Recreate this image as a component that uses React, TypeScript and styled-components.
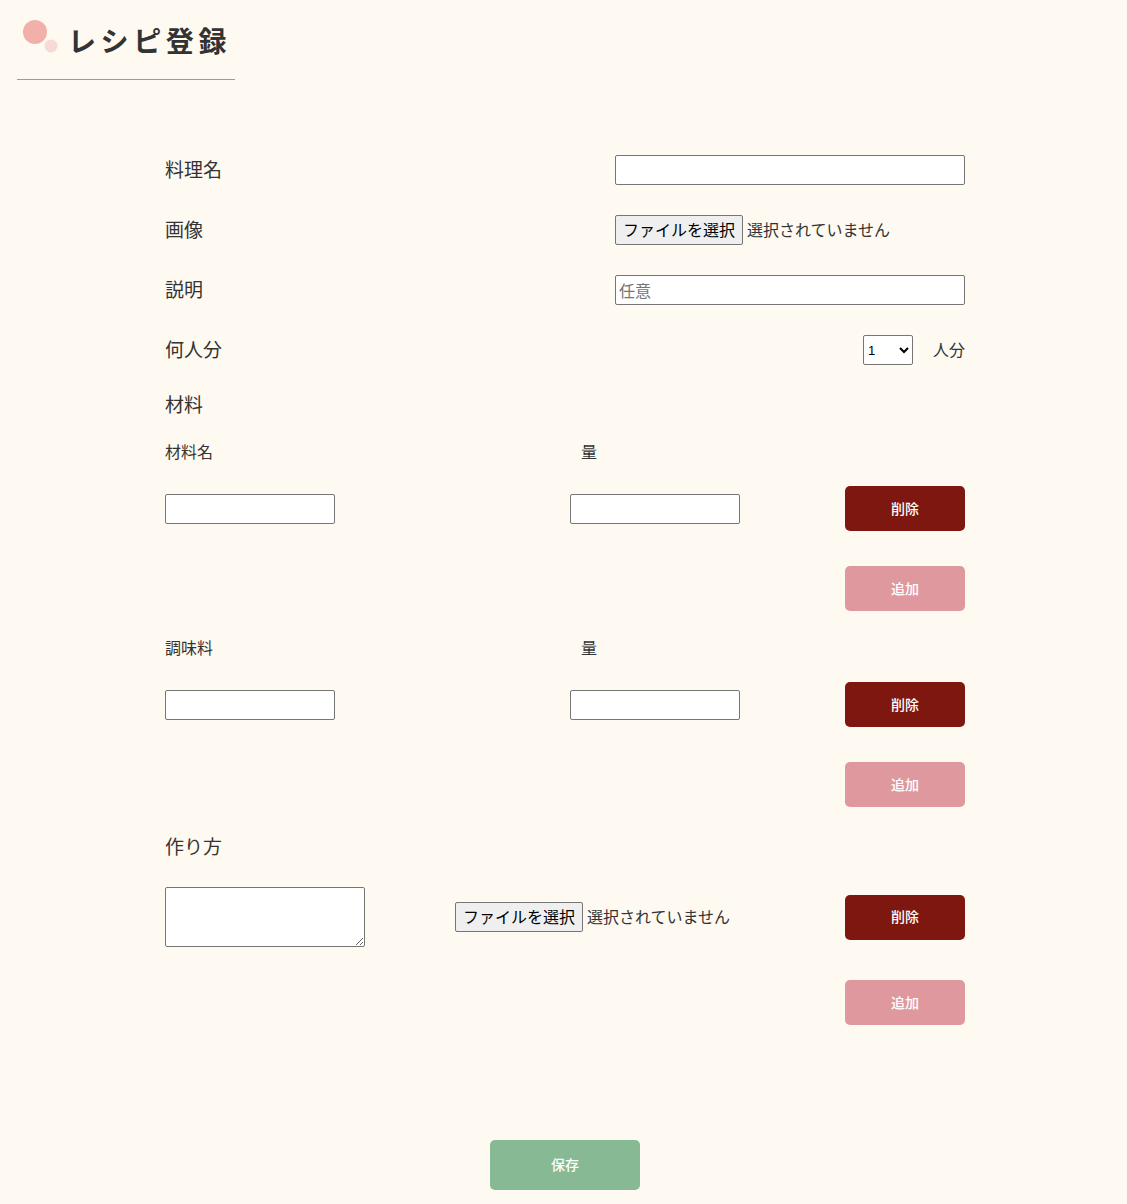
import React, { useState } from 'react';
import styled, { createGlobalStyle } from 'styled-components';

const GlobalStyle = createGlobalStyle`
  body {
    margin: 0;
    background-color: #fef9f1;
    color: #333;
    font-family: "Noto Sans CJK JP", "Noto Sans", sans-serif;
  }
`;

const Page = styled.div`
  padding-bottom: 14px;
`;

const Header = styled.header`
  display: flex;
  align-items: flex-start;
  gap: 9px;
  width: 212px;
  height: 79px;
  margin-left: 17px;
  padding-left: 6px;
  border-bottom: 1px solid #d9837b;
`;

const Dots = styled.svg`
  margin-top: 19px;
  flex-shrink: 0;
`;

const Title = styled.h1`
  margin: 20px 0 0;
  font-size: 28px;
  line-height: 40px;
  font-weight: 700;
  letter-spacing: 4.6px;
  color: #333;
  white-space: nowrap;
`;

const Form = styled.form`
  width: 800px;
  margin: 75px auto 0;
  padding-left: 3px;
  display: flex;
  flex-direction: column;
`;

const FieldRow = styled.div`
  display: flex;
  justify-content: space-between;
  align-items: center;
  height: 30px;
  margin-bottom: 30px;
`;

const Label = styled.label`
  font-size: 19px;
  line-height: 30px;
  margin-top: -3px;
`;

const SectionTitle = styled.div<{ $top: number; $bottom: number }>`
  font-size: 19px;
  line-height: 30px;
  margin-top: ${(p) => p.$top}px;
  margin-bottom: ${(p) => p.$bottom}px;
`;

const TextInput = styled.input<{ $width: number }>`
  box-sizing: border-box;
  width: ${(p) => p.$width}px;
  height: 30px;
  padding: 0 3px;
  border: 1px solid #767676;
  border-radius: 2px;
  background: #fff;
  font-family: inherit;
  font-size: 16px;
  color: #333;
  &::placeholder {
    color: #757575;
  }
`;

const FilePicker = styled.div`
  display: flex;
  align-items: center;
  gap: 4px;
  font-size: 16px;
  color: #333;
`;

const FileButton = styled.label`
  box-sizing: border-box;
  height: 30px;
  padding: 0 7px 2px;
  display: flex;
  align-items: center;
  border: 1px solid #767676;
  border-radius: 2px;
  background: #efefef;
  color: #000;
  font-size: 16px;
  cursor: pointer;
  input {
    display: none;
  }
`;

const FileStatus = styled.span`
  margin-top: -2px;
`;

const ServingsBox = styled.div`
  display: flex;
  align-items: center;
  gap: 20px;
  font-size: 16px;
  span {
    margin-top: -2px;
  }
`;

const Select = styled.select`
  width: 50px;
  height: 30px;
  border: 1px solid #767676;
  border-radius: 2px;
  background: #fff;
  font-size: 13px;
  font-family: "Liberation Sans", Arial, sans-serif;
`;

const ColumnHeads = styled.div`
  display: grid;
  grid-template-columns: 416px 1fr;
  font-size: 16px;
  line-height: 24px;
  margin-top: -1px;
  margin-bottom: 23px;
`;

const ItemRow = styled.div<{ $cols: string; $height: number }>`
  display: grid;
  grid-template-columns: ${(p) => p.$cols};
  align-items: center;
  height: ${(p) => p.$height}px;
`;

const TextArea = styled.textarea`
  box-sizing: border-box;
  width: 200px;
  height: 60px;
  border: 1px solid #767676;
  border-radius: 2px;
  background: #fff;
  font-family: inherit;
  font-size: 14px;
  resize: vertical;
  display: block;
`;

const ActionButton = styled.button<{ $variant: 'delete' | 'add' }>`
  width: 120px;
  height: 45px;
  padding: 0 0 2px;
  border: none;
  border-radius: 5px;
  background-color: ${(p) => (p.$variant === 'delete' ? '#7e1710' : '#df999e')};
  color: #fff;
  font-family: inherit;
  font-size: 14px;
  font-weight: 500;
  cursor: pointer;
`;

const AddWrap = styled.div<{ $top: number; $bottom: number }>`
  display: flex;
  justify-content: flex-end;
  margin-top: ${(p) => p.$top}px;
  margin-bottom: ${(p) => p.$bottom}px;
`;

const SaveButton = styled.button`
  align-self: center;
  width: 150px;
  height: 50px;
  margin-top: 115px;
  padding: 0 0 3px;
  border: none;
  border-radius: 5px;
  background-color: #87b994;
  color: #fff;
  font-family: inherit;
  font-size: 14px;
  font-weight: 500;
  cursor: pointer;
`;

const FileInput: React.FC = () => (
  <FilePicker>
    <FileButton>
      ファイルを選択
      <input type="file" />
    </FileButton>
    <FileStatus>選択されていません</FileStatus>
  </FilePicker>
);

const App: React.FC = () => {
  const [servings, setServings] = useState('1');

  return (
    <Page>
      <GlobalStyle />
      <Header>
        <Dots width="36" height="36" viewBox="0 0 36 36">
          <circle cx="12" cy="13" r="12" fill="#f2b0ab" />
          <circle cx="28" cy="27" r="6.5" fill="#f9d9d6" />
        </Dots>
        <Title>レシピ登録</Title>
      </Header>

      <Form onSubmit={(e) => e.preventDefault()}>
        <FieldRow>
          <Label>料理名</Label>
          <TextInput $width={350} />
        </FieldRow>
        <FieldRow>
          <Label>画像</Label>
          <div style={{ width: 350 }}>
            <FileInput />
          </div>
        </FieldRow>
        <FieldRow>
          <Label>説明</Label>
          <TextInput $width={350} placeholder="任意" />
        </FieldRow>
        <FieldRow>
          <Label>何人分</Label>
          <ServingsBox>
            <Select value={servings} onChange={(e) => setServings(e.target.value)}>
              {[1, 2, 3, 4, 5, 6].map((n) => (
                <option key={n} value={n}>{n}</option>
              ))}
            </Select>
            <span>人分</span>
          </ServingsBox>
        </FieldRow>

        <SectionTitle $top={-6} $bottom={21}>材料</SectionTitle>
        <ColumnHeads>
          <span>材料名</span>
          <span>量</span>
        </ColumnHeads>
        <ItemRow $cols="405px 275px 120px" $height={45}>
          <TextInput $width={170} />
          <TextInput $width={170} />
          <ActionButton type="button" $variant="delete">削除</ActionButton>
        </ItemRow>
        <AddWrap $top={35} $bottom={25}>
          <ActionButton type="button" $variant="add">追加</ActionButton>
        </AddWrap>

        <ColumnHeads>
          <span>調味料</span>
          <span>量</span>
        </ColumnHeads>
        <ItemRow $cols="405px 275px 120px" $height={45}>
          <TextInput $width={170} />
          <TextInput $width={170} />
          <ActionButton type="button" $variant="delete">削除</ActionButton>
        </ItemRow>
        <AddWrap $top={35} $bottom={0}>
          <ActionButton type="button" $variant="add">追加</ActionButton>
        </AddWrap>

        <SectionTitle $top={24} $bottom={26}>作り方</SectionTitle>
        <ItemRow $cols="290px 390px 120px" $height={60}>
          <TextArea />
          <FileInput />
          <ActionButton type="button" $variant="delete">削除</ActionButton>
        </ItemRow>
        <AddWrap $top={33} $bottom={0}>
          <ActionButton type="button" $variant="add">追加</ActionButton>
        </AddWrap>

        <SaveButton type="submit">保存</SaveButton>
      </Form>
    </Page>
  );
};

export default App;
